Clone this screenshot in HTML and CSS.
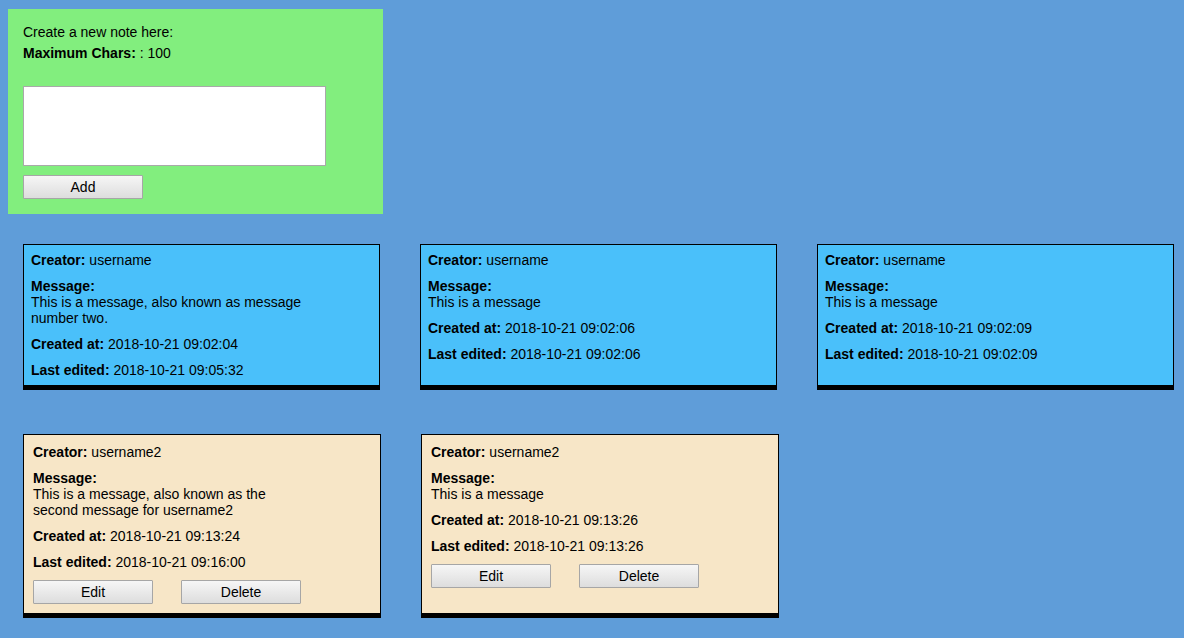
FILE: index.html
```html
<!DOCTYPE html>
<html>
<head>
<meta charset="utf-8">
<title>Notes</title>
<link rel="stylesheet" href="styles.css">
</head>
<body>
  <div class="composer">
    <div class="composer-title">Create a new note here:</div>
    <div class="composer-limit"><b>Maximum Chars:</b> : 100</div>
    <textarea class="composer-input"></textarea>
    <button class="btn">Add</button>
  </div>

  <div class="note-row row-first">
    <div class="note note-blue">
      <div class="field"><b>Creator:</b> username</div>
      <div class="field"><b>Message:</b><div class="msg">This is a message, also known as message number two.</div></div>
      <div class="field"><b>Created at:</b> 2018-10-21 09:02:04</div>
      <div class="field"><b>Last edited:</b> 2018-10-21 09:05:32</div>
    </div>
    <div class="note note-blue">
      <div class="field"><b>Creator:</b> username</div>
      <div class="field"><b>Message:</b><div class="msg">This is a message</div></div>
      <div class="field"><b>Created at:</b> 2018-10-21 09:02:06</div>
      <div class="field"><b>Last edited:</b> 2018-10-21 09:02:06</div>
    </div>
    <div class="note note-blue">
      <div class="field"><b>Creator:</b> username</div>
      <div class="field"><b>Message:</b><div class="msg">This is a message</div></div>
      <div class="field"><b>Created at:</b> 2018-10-21 09:02:09</div>
      <div class="field"><b>Last edited:</b> 2018-10-21 09:02:09</div>
    </div>
  </div>

  <div class="note-row row-second">
    <div class="note note-beige">
      <div class="field"><b>Creator:</b> username2</div>
      <div class="field"><b>Message:</b><div class="msg">This is a message, also known as the second message for username2</div></div>
      <div class="field"><b>Created at:</b> 2018-10-21 09:13:24</div>
      <div class="field"><b>Last edited:</b> 2018-10-21 09:16:00</div>
      <div class="actions"><button class="btn">Edit</button><button class="btn">Delete</button></div>
    </div>
    <div class="note note-beige">
      <div class="field"><b>Creator:</b> username2</div>
      <div class="field"><b>Message:</b><div class="msg">This is a message</div></div>
      <div class="field"><b>Created at:</b> 2018-10-21 09:13:26</div>
      <div class="field"><b>Last edited:</b> 2018-10-21 09:13:26</div>
      <div class="actions"><button class="btn">Edit</button><button class="btn">Delete</button></div>
    </div>
  </div>
</body>
</html>
```

FILE: styles.css
```css
html, body {
  margin: 0;
  padding: 0;
}

body {
  background: #5f9dd9;
  padding: 9px 8px;
  font-family: "Liberation Sans", Arial, sans-serif;
  font-size: 14px;
  line-height: 16px;
  color: #000;
  height: 638px;
  box-sizing: border-box;
  overflow: hidden;
}

.composer {
  width: 375px;
  height: 205px;
  box-sizing: border-box;
  padding: 15px;
  background: #82ee7e;
}

.composer-title {
  margin-bottom: 5px;
}

.composer-input {
  display: block;
  margin: 25px 0 0 0;
  width: 303px;
  height: 80px;
  box-sizing: border-box;
  border: 1px solid #a9a9a9;
  background: #fff;
  resize: none;
  padding: 2px;
}

.composer .btn {
  margin-top: 9px;
}

.btn {
  display: block;
  width: 120px;
  height: 24px;
  box-sizing: border-box;
  border: 1px solid #a6a6a6;
  border-radius: 1px;
  background: linear-gradient(#f6f6f6, #dddddd);
  font-family: "Liberation Sans", Arial, sans-serif;
  font-size: 14px;
  color: #000;
  padding: 0;
}

.note-row {
  display: flex;
  gap: 40px;
  padding-left: 15px;
  align-items: stretch;
}

.row-first {
  margin-top: 30px;
}

.row-second {
  margin-top: 44px;
}

.note {
  display: flex;
  flex-direction: column;
  gap: 10px;
  border: 1px solid #000;
  border-bottom-width: 5px;
}

.note-blue {
  width: 357px;
  box-sizing: border-box;
  background: #4ac0fa;
  padding: 7px 7px 7px 7px;
}

.note-beige {
  width: 358px;
  box-sizing: border-box;
  background: #f7e6c7;
  padding: 9px;
}

.msg {
  max-width: 275px;
}

.actions {
  display: flex;
  gap: 28px;
}
```
